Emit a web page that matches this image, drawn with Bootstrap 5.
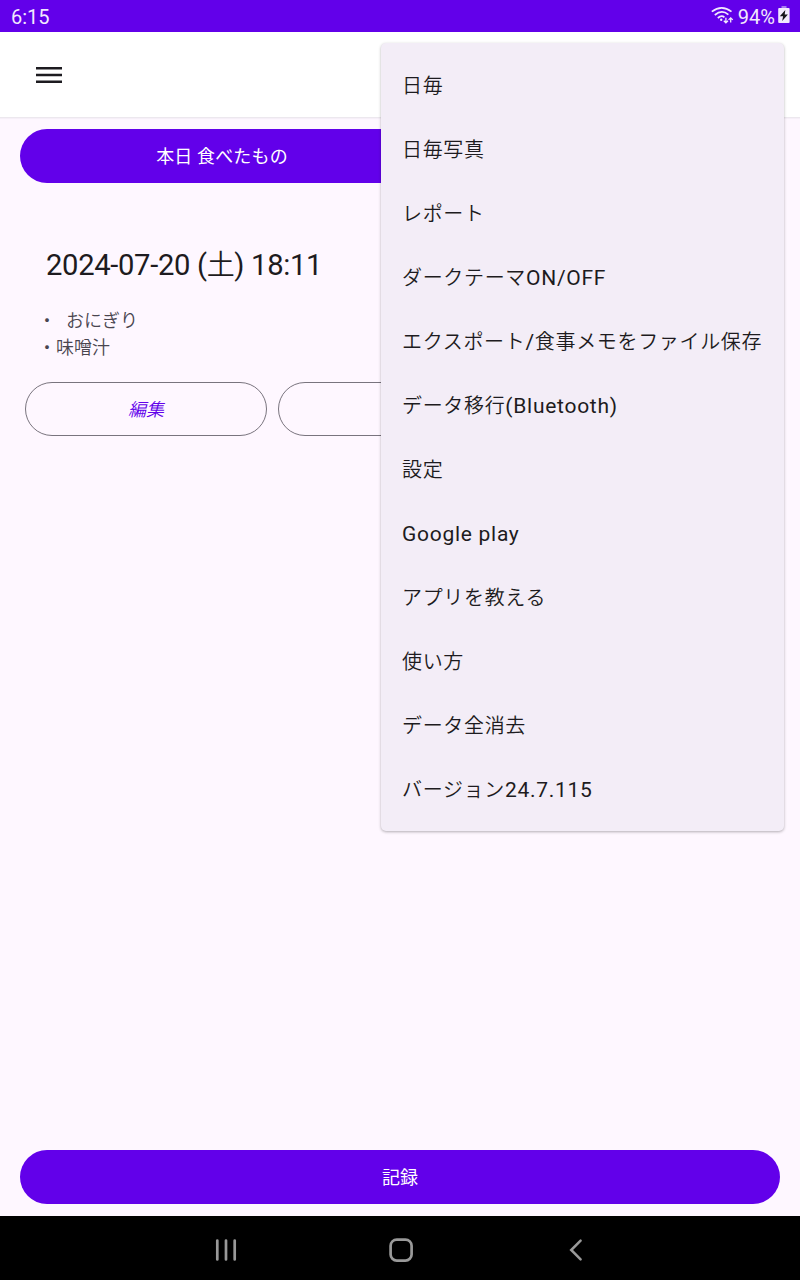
<!DOCTYPE html>
<html lang="ja">
<head>
<meta charset="utf-8">
<meta name="viewport" content="width=device-width, initial-scale=1">
<title>食事メモ</title>
<link rel="stylesheet" href="https://cdn.jsdelivr.net/npm/bootstrap@5.3.0/dist/css/bootstrap.min.css">
<style>
body { font-family: Roboto, "Noto Sans CJK JP", sans-serif; background: #fef7ff; color: #1d1b20; height: 1280px; overflow: hidden; }
svg { display: block; flex: none; }
.status-bar { height: 32px; background: #6200ea; color: #f1e8fd; font-size: 20px; padding: 2px 10px 0 11px; line-height: 30px; }
.app-bar { height: 86px; padding-left: 36px; border-bottom: 1px solid #ece8ee; box-shadow: 0 1px 1px #f6eff8; }
.pill { height: 54px; border-radius: 27px; font-size: 18px; line-height: 26px; padding: 2px 0 0; }
.pill-fill, .pill-fill:hover { background: #6200ea; color: #fff; border: 0; }
.pill-line, .pill-line:hover { border: 1px solid #79747e; color: #6200ea; font-style: italic; width: 242px; font-weight: 350; }
.today { width: 404px; letter-spacing: .15px; margin: 11px 0 0 20px; }
.record { margin: 0 20px 12px; }
.entry-date { font-size: 29.2px; letter-spacing: -.33px; line-height: 40px; margin: 62px 0 0 46px; }
.entry-date .cj { font-size: 28px; font-weight: 350; }
.entry-note { font-size: 18px; line-height: 27px; color: #49454f; margin: 21px 0 0 38px; font-weight: 350; }
.entry-note .cj { margin-left: 10px; }
.actions { margin: 21px 0 0 25px; gap: 11px; }
.overflow-menu { position: absolute; left: 381px; top: 43px; width: 403px; height: 788px; padding: 11px 0 9px; border: 0; border-radius: 5px; background: #f3edf7; box-shadow: 0 1px 3px rgba(0,0,0,.3); }
.overflow-menu .dropdown-item { height: 64px; padding: 0 0 0 21px; font-size: 20px; line-height: 64px; letter-spacing: .67px; color: #1d1b20; font-weight: 350; }
.en { font-size: 21px; letter-spacing: .72px; font-weight: 400; line-height: 1; }
.battery { margin: 3px 0 0 3px; }
.nav-bar { height: 64px; background: #000; }
</style>
<script src="https://cdn.jsdelivr.net/npm/bootstrap@5.3.0/dist/js/bootstrap.bundle.min.js"></script>
</head>
<body class="d-flex flex-column position-relative">
<div class="status-bar d-flex justify-content-between">
  <span>6:15</span>
  <div class="d-flex">
    <svg width="23" height="22" viewBox="0 0 23 22" fill="none" stroke="#f1e8fd" stroke-width="1.7" class="me-1">
      <path d="M.8 9.7Q10.7 2.1 20.5 9.7M3.8 13Q10.7 7.2 17.4 12.6M6.8 16Q10.6 12.7 13.4 15.3"/>
      <circle cx="10.2" cy="17.8" r="1.2" fill="#f1e8fd" stroke="none"/>
      <path d="M14.9 15.7v5M12.8 18.7l2.1 2.1 2.1-2.1M19.7 20.4v-4.7M17.6 17.9l2.1-2.1 2.1 2.1" stroke-width="1.3"/>
    </svg>
    <span>94%</span>
    <svg class="battery" width="12" height="18" viewBox="0 0 12 18">
      <path fill="#a77cf0" d="M3.5 1h5v3h-5z"/><rect x=".2" y="3" width="11.4" height="15" rx="1" fill="#f1e8fd"/>
      <path fill="#15131a" d="M7.3 5 1.8 11.2h3.3L4.2 16l5.7-6.4H6.7z"/>
    </svg>
  </div>
</div>
<header class="app-bar bg-white d-flex align-items-center">
  <svg width="26" height="17" viewBox="0 0 26 17" fill="#1d1b20"><path d="M0 1h26v2.6H0zM0 7.7h26v2.6H0zM0 14.4h26V17H0z"/></svg>
</header>
<main class="flex-grow-1">
  <button class="btn pill pill-fill today d-block">本日 食べたもの</button>
  <h1 class="entry-date fw-normal mb-0">2024-07-20 (<span class="cj">土</span>) 18:11</h1>
  <div class="entry-note">・<span class="cj">おにぎり</span><br>・味噌汁</div>
  <div class="actions d-flex">
    <button class="btn pill pill-line">編集</button>
    <button class="btn pill pill-line"></button>
  </div>
</main>
<button class="btn pill pill-fill record flex-shrink-0">記録</button>
<nav class="nav-bar flex-shrink-0">
  <svg width="800" height="64" viewBox="0 0 800 64" fill="none" stroke="#999" stroke-width="2.7" stroke-linecap="round">
    <path d="M217.3 24.5v19M226 24.5v19M234.7 24.5v19"/>
    <rect x="390.6" y="23.6" width="21" height="21" rx="6.2"/>
    <path d="m580.6 24.6-9.4 9.4 9.4 9.4" stroke-width="2.5"/>
  </svg>
</nav>
<div class="overflow-menu dropdown-menu show">
  <a class="dropdown-item">日毎</a>
  <a class="dropdown-item">日毎写真</a>
  <a class="dropdown-item">レポート</a>
  <a class="dropdown-item">ダークテーマ<span class="en">ON/OFF</span></a>
  <a class="dropdown-item">エクスポート<span class="en">/</span>食事メモをファイル保存</a>
  <a class="dropdown-item">データ移行<span class="en">(Bluetooth)</span></a>
  <a class="dropdown-item">設定</a>
  <a class="dropdown-item"><span class="en">Google play</span></a>
  <a class="dropdown-item">アプリを教える</a>
  <a class="dropdown-item">使い方</a>
  <a class="dropdown-item">データ全消去</a>
  <a class="dropdown-item">バージョン<span class="en">24.7.115</span></a>
</div>
</body>
</html>
